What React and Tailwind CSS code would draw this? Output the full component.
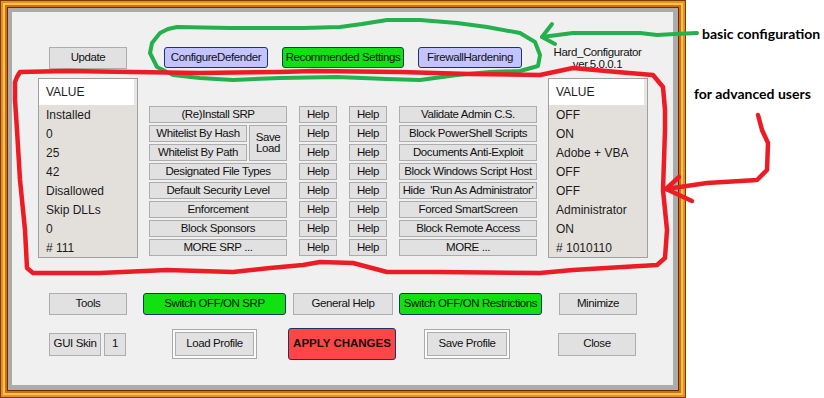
import React from 'react';

const Btn = ({ className = '', children }) => (
  <div className={`flex items-center justify-center border border-[#adadad] bg-[#e1e1e1] text-[11.5px] leading-none tracking-[-0.4px] text-[#111] whitespace-pre ${className}`}>
    {children}
  </div>
);

const ColorBtn = ({ className = '', children }) => (
  <div className={`flex items-center justify-center rounded-[3px] border border-[#1d3566] text-[11.5px] leading-none tracking-[-0.4px] text-[#111] ${className}`}>
    {children}
  </div>
);

// default-style button with the double border
const ProfileBtn = ({ className = '', children }) => (
  <div className={`flex border border-[#a9a9a9] bg-[#fbfbfb] p-[2px] ${className}`}>
    <div className="flex flex-1 items-center justify-center border border-[#adadad] bg-[#e1e1e1] text-[11.5px] leading-none tracking-[-0.4px] text-[#111]">
      {children}
    </div>
  </div>
);

const ValuePanel = ({ values, className = '' }) => (
  <div className={`flex h-[180px] w-[100px] flex-col border border-[#a0a0a0] bg-[#e3e0db] ${className}`}>
    <div className="flex h-[26px] bg-white">
      <div className="flex flex-1 items-center pl-[7px] text-[12px] text-[#1b1b1b]">VALUE</div>
      <div className="w-[3px] bg-[#e6e6e6]" />
    </div>
    {values.map((v, i) => (
      <div key={i} className="flex h-[19px] items-center pl-[7px] text-[12px] text-[#1b1b1b]">
        {v}
      </div>
    ))}
  </div>
);

const leftValues = ['Installed', '0', '25', '42', 'Disallowed', 'Skip DLLs', '0', '# 111'];
const rightValues = ['OFF', 'ON', 'Adobe + VBA', 'OFF', 'OFF', 'Administrator', 'ON', '# 1010110'];
const srpTail = ['Designated File Types', 'Default Security Level', 'Enforcement', 'Block Sponsors', 'MORE SRP ...'];
const restrictions = [
  'Validate Admin C.S.',
  'Block PowerShell Scripts',
  'Documents Anti-Exploit',
  'Block Windows Script Host',
  "Hide  'Run As Administrator'",
  'Forced SmartScreen',
  'Block Remote Access',
  'MORE ...',
];

const HelpColumn = () => (
  <div className="ml-[12px] flex w-[38px] flex-col gap-[2px]">
    {restrictions.map((_, i) => (
      <Btn key={i} className="h-[17px]">Help</Btn>
    ))}
  </div>
);

const Annotations = () => (
  <svg className="pointer-events-none absolute left-0 top-0" width="824" height="398" viewBox="0 0 824 398" fill="none" strokeLinecap="round" strokeLinejoin="round">
    {/* green loop + arrow */}
    <g stroke="#22b14c" strokeWidth="4">
      <path d="M168 29 L177 27 L230 28 L270 28 L303 28 L340 27 L362 24 L387 20 L420 20 L457 23 L487 27 L520 33 L535 42 L540 55 L538 66 L520 71 L490 72 L457 75 L420 80 L387 79 L337 77 L280 78 L233 80 L200 78 L173 75 L157 67 L150 53 L152 43 L160 33 Z" />
      <path d="M697 33 L675 34 L657 35 L640 33 L600 33 L573 33 L542 37" />
      <path d="M552 24 L542 37 L555 44" />
    </g>
    {/* red loop + arrow */}
    <g stroke="#ed1c24" strokeWidth="4.5">
      <path d="M17 77 L20 72 L67 71 L133 72 L200 73 L280 72 L313 71 L400 72 L470 74 L540 75 L573 68 L617 72 L653 75 L663 87 L665 110 L665 130 L663 190 L667 230 L665 258 L657 265 L623 267 L573 270 L540 273 L437 272 L387 272 L353 263 L320 262 L303 265 L270 268 L233 272 L167 270 L100 273 L33 273 L27 268 L25 230 L20 180 L17 130 L15 100 L15 82 Z" />
      <path d="M758 115 L762 130 L768 143 L767 170 L757 180 L707 183 L673 188 L666 189" />
      <path d="M679 177 L666 189 L692 201" />
    </g>
  </svg>
);

export default function App() {
  return (
    <div className="relative flex h-[398px] w-[824px] overflow-hidden bg-white font-['Liberation_Sans',Arial,sans-serif]">
      {/* window frame */}
      <div className="h-[398px] w-[686px] flex-none border border-[#7a3a00]">
        <div className="h-full border-2 border-[#e8911a]">
          <div className="h-full border-2 border-[#ffc35c]">
            <div className="h-full border-2 border-[#d46f00]">
              <div className="h-full border border-[#6a2a00]">
                <div className="h-full border-l-4 border-t-4 border-r-[5px] border-b-[5px] border-[#ababab]">
                  <div className="flex h-full flex-col bg-[#f0f0f0]">
                    {/* top row */}
                    <div className="mt-[35px] flex h-[22px] items-start">
                      <Btn className="ml-[37px] h-[22px] w-[78px]">Update</Btn>
                      <ColorBtn className="ml-[37px] h-[21px] w-[104px] bg-[#c3c3ff]">ConfigureDefender</ColorBtn>
                      <ColorBtn className="ml-[14px] h-[21px] w-[122px] bg-[#11e011]">Recommended Settings</ColorBtn>
                      <ColorBtn className="ml-[14px] h-[21px] w-[104px] bg-[#c3c3ff]">FirewallHardening</ColorBtn>
                      <div className="-mt-[1px] ml-[26px] flex w-[99px] flex-col items-center text-[11.5px] leading-[12px] tracking-[-0.4px] text-[#111]">
                        <span>Hard_Configurator</span>
                        <span>ver.5.0.0.1</span>
                      </div>
                    </div>

                    {/* middle: values + option buttons */}
                    <div className="mt-[9px] flex items-start">
                      <ValuePanel values={leftValues} className="ml-[26px]" />

                      <div className="ml-[11px] mt-[28px] flex w-[138px] flex-col gap-[2px]">
                        <Btn className="h-[17px]">(Re)Install SRP</Btn>
                        <div className="flex gap-[2px]">
                          <div className="flex w-[98px] flex-col gap-[2px]">
                            <Btn className="h-[17px]">Whitelist By Hash</Btn>
                            <Btn className="h-[17px]">Whitelist By Path</Btn>
                          </div>
                          <Btn className="h-[36px] w-[38px] flex-col leading-[14px]">
                            <span>Save</span>
                            <span>Load</span>
                          </Btn>
                        </div>
                        {srpTail.map((t) => (
                          <Btn key={t} className="h-[17px]">{t}</Btn>
                        ))}
                      </div>

                      <div className="mt-[28px] flex">
                        <HelpColumn />
                        <HelpColumn />
                        <div className="ml-[12px] flex w-[138px] flex-col gap-[2px]">
                          {restrictions.map((t) => (
                            <Btn key={t} className="h-[17px]">{t}</Btn>
                          ))}
                        </div>
                      </div>

                      <ValuePanel values={rightValues} className="ml-[11px]" />
                    </div>

                    {/* switches row */}
                    <div className="mt-[35px] flex h-[22px] items-start">
                      <Btn className="ml-[37px] h-[22px] w-[78px]">Tools</Btn>
                      <ColorBtn className="ml-[16px] h-[22px] w-[143px] bg-[#11e011]">Switch OFF/ON SRP</ColorBtn>
                      <Btn className="ml-[7px] h-[22px] w-[100px]">General Help</Btn>
                      <ColorBtn className="ml-[6px] h-[22px] w-[143px] bg-[#11e011]">Switch OFF/ON Restrictions</ColorBtn>
                      <Btn className="ml-[17px] h-[22px] w-[78px]">Minimize</Btn>
                    </div>

                    {/* bottom row */}
                    <div className="mt-[13px] flex h-[32px] items-center">
                      <Btn className="ml-[37px] h-[23px] w-[52px]">GUI Skin</Btn>
                      <Btn className="ml-[3px] h-[23px] w-[22px]">1</Btn>
                      <ProfileBtn className="ml-[46px] h-[30px] w-[85px]">Load Profile</ProfileBtn>
                      <ColorBtn className="ml-[31px] h-[32px] w-[108px] bg-[#ff4646] text-[10.5px] font-bold tracking-normal text-[#1a1a1a]">APPLY CHANGES</ColorBtn>
                      <ProfileBtn className="ml-[28px] h-[30px] w-[86px]">Save Profile</ProfileBtn>
                      <Btn className="ml-[48px] h-[23px] w-[78px]">Close</Btn>
                    </div>
                  </div>
                </div>
              </div>
            </div>
          </div>
        </div>
      </div>

      {/* annotation labels */}
      <div className="flex flex-1 flex-col font-['Lato',sans-serif] text-[14px] font-bold leading-[16px] text-black">
        <span className="pl-[16px] pt-[26px]">basic configuration</span>
        <span className="mt-[44px] pl-[8px]">for advanced users</span>
      </div>

      <Annotations />
    </div>
  );
}
